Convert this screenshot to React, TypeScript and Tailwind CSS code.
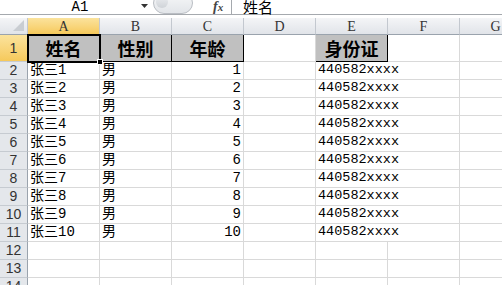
const COLS = ['A', 'B', 'C', 'D', 'E', 'F', 'G']

const rows = Array.from({ length: 10 }, (_, i) => ({
  name: `张三${i + 1}`,
  gender: '男',
  age: i + 1,
  id: '440582xxxx',
}))

const dataFont = 'font-["Liberation_Mono","Noto_Sans_CJK_SC",monospace] text-[14px] text-black'

function HeaderCell({ children, active }: { children?: React.ReactNode; active?: boolean }) {
  return (
    <div
      className={`flex items-center justify-center border-r border-b border-r-[#c3c8cf] border-b-[#9aa3ad] font-["Liberation_Serif",serif] text-[14px] text-[#333] ${
        active ? 'bg-gradient-to-b from-[#fbe39c] to-[#f6c95a]' : 'bg-gradient-to-b from-[#f4f5f7] to-[#e1e4e9]'
      }`}
    >
      {children}
    </div>
  )
}

function RowHead({ n, active }: { n: number; active?: boolean }) {
  return (
    <div
      className={`flex items-center justify-center border-r border-b border-r-[#9aa3ad] border-b-[#c6cbd1] font-["Liberation_Sans",sans-serif] text-[14px] text-[#333] ${
        active ? 'bg-gradient-to-b from-[#fbe39c] to-[#f6c95a]' : 'bg-[#e4e7eb]'
      }`}
    >
      {n}
    </div>
  )
}

function Cell({
  children,
  align = 'left',
  noRight,
}: {
  children?: React.ReactNode
  align?: 'left' | 'right'
  noRight?: boolean
}) {
  return (
    <div
      className={`flex items-center border-b border-[#d9d9d9] whitespace-nowrap ${noRight ? '' : 'border-r'} ${dataFont} ${
        align === 'right' ? 'justify-end pr-[2px]' : 'pl-[2px]'
      }`}
    >
      {children}
    </div>
  )
}

function TitleCell({ children }: { children?: React.ReactNode }) {
  return (
    <div className='flex items-center justify-center bg-[#c0c0c0] border-r border-b border-black font-["Noto_Sans_CJK_SC",sans-serif] text-[18px] font-bold text-black leading-none'>
      {children}
    </div>
  )
}

export default function App() {
  return (
    <div className="w-[502px] h-[285px] overflow-hidden bg-white relative">
      {/* formula bar */}
      <div className="h-[15px] flex items-center border-b border-[#a5a9ae] relative">
        <div className="w-[150px] h-full flex items-center justify-center font-['Liberation_Mono',monospace] text-[14px] text-black pl-[10px]">
          A1
        </div>
        <svg className="absolute left-[141px] top-[4px]" width="7" height="4" viewBox="0 0 7 4">
          <path d="M0 0 H7 L3.5 4 Z" fill="#333" />
        </svg>
        <div className="absolute left-[153px] top-[-8px] w-[40px] h-[22px] rounded-full border border-[#b9bdc3] bg-gradient-to-b from-[#f7f8f9] to-[#e2e5e9]" />
        <div className="absolute left-[156px] top-[-4px] w-[12px] h-[12px] rounded-full bg-gradient-to-b from-[#eceef1] to-[#cfd3d8]" />
        <span className="absolute left-[213px] top-[-1px] font-['Liberation_Serif',serif] italic font-bold text-[14px] text-[#444] leading-[15px]">
          f<span className="text-[11px]">x</span>
        </span>
        <div className="absolute left-[231px] top-0 h-full w-px bg-[#a5a9ae]" />
        <span className="absolute left-[243px] top-0 font-['Noto_Sans_CJK_SC',sans-serif] text-[15px] text-black leading-[14px]">
          姓名
        </span>
      </div>
      <div className="h-[3px]" />

      {/* sheet */}
      <div className="relative grid grid-cols-[28px_repeat(7,72px)] grid-rows-[17px_27px_repeat(13,18px)]">
        <div className="relative border-r border-b border-r-[#c3c8cf] border-b-[#9aa3ad] bg-gradient-to-b from-[#f4f5f7] to-[#e1e4e9]">
          <svg className="absolute right-[3px] bottom-[3px]" width="11" height="11" viewBox="0 0 11 11">
            <path d="M11 0 V11 H0 Z" fill="#c9cdd2" />
          </svg>
        </div>
        {COLS.map((c) => (
          <HeaderCell key={c} active={c === 'A'}>
            {c}
          </HeaderCell>
        ))}

        <RowHead n={1} active />
        <TitleCell>姓名</TitleCell>
        <TitleCell>性别</TitleCell>
        <TitleCell>年龄</TitleCell>
        <Cell />
        <TitleCell>身份证</TitleCell>
        <Cell />
        <Cell />

        {rows.map((r, i) => (
          <div key={i} className="contents">
            <RowHead n={i + 2} />
            <Cell>{r.name}</Cell>
            <Cell>{r.gender}</Cell>
            <Cell align="right">{r.age}</Cell>
            <Cell />
            <Cell noRight>
              <span className="text-[13.5px]">{r.id}</span>
            </Cell>
            <Cell />
            <Cell />
          </div>
        ))}

        {[12, 13, 14].map((n) => (
          <div key={n} className="contents">
            <RowHead n={n} />
            {COLS.map((c) => (
              <Cell key={c} />
            ))}
          </div>
        ))}

        {/* selection on A1 */}
        <div className="absolute left-[27px] top-[16px] w-[74px] h-[29px] border-2 border-black pointer-events-none" />
        <div className="absolute left-[97px] top-[41px] w-[6px] h-[6px] bg-black border border-white pointer-events-none" />
      </div>
    </div>
  )
}
